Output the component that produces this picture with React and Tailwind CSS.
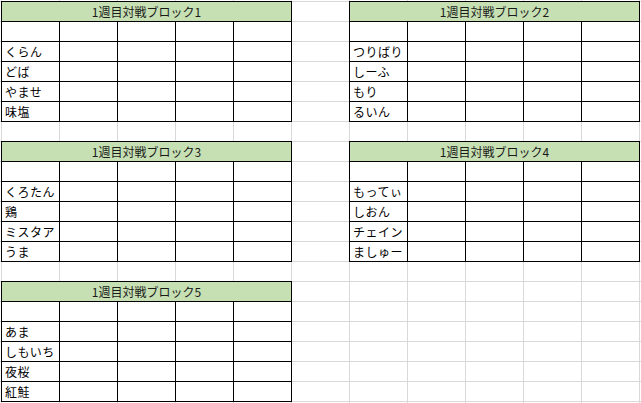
import React from 'react';

const blocks = [
  { n: 1, pos: 'col-start-1 row-start-1', names: ['くらん', 'どば', 'やませ', '味塩'] },
  { n: 2, pos: 'col-start-7 row-start-1', names: ['つりばり', 'しーふ', 'もり', 'るいん'] },
  { n: 3, pos: 'col-start-1 row-start-8', names: ['くろたん', '鶏', 'ミスタア', 'うま'] },
  { n: 4, pos: 'col-start-7 row-start-8', names: ['もってぃ', 'しおん', 'チェイン', 'ましゅー'] },
  { n: 5, pos: 'col-start-1 row-start-15', names: ['あま', 'しもいち', '夜桜', '紅鮭'] },
];

function Block({ n, names, pos }) {
  return (
    <div className={`${pos} col-span-5 row-span-6 -mr-px -mb-px border-r border-b border-black bg-white grid grid-cols-[repeat(5,58px)] auto-rows-[20px]`}>
      <div className="col-span-5 border-l border-t border-black bg-[#c6e0b4] flex items-center justify-center pt-px text-[12px] text-[#1a1a1a]">
        1週目対戦ブロック{n}
      </div>
      {['', ...names].map((name, r) =>
        [0, 1, 2, 3, 4].map((c) => (
          <div key={`${r}-${c}`} className="border-l border-t border-black flex items-center pl-[3px] text-[12px] tracking-[0.5px] text-black">
            {c === 0 ? name : ''}
          </div>
        ))
      )}
    </div>
  );
}

export default function App() {
  return (
    <div
      className="w-full h-[403px] overflow-hidden bg-white bg-[linear-gradient(to_right,#d9d9d9_1px,transparent_1px),linear-gradient(to_bottom,#d9d9d9_1px,transparent_1px)] bg-size-[58px_20px] bg-position-[1px_1px] pl-px pt-px"
      style={{ fontFamily: '"Noto Sans CJK JP", "Noto Sans", sans-serif' }}
    >
      <div className="grid grid-cols-[repeat(11,58px)] auto-rows-[20px]">
        {blocks.map((b) => (
          <Block key={b.n} {...b} />
        ))}
      </div>
    </div>
  );
}
